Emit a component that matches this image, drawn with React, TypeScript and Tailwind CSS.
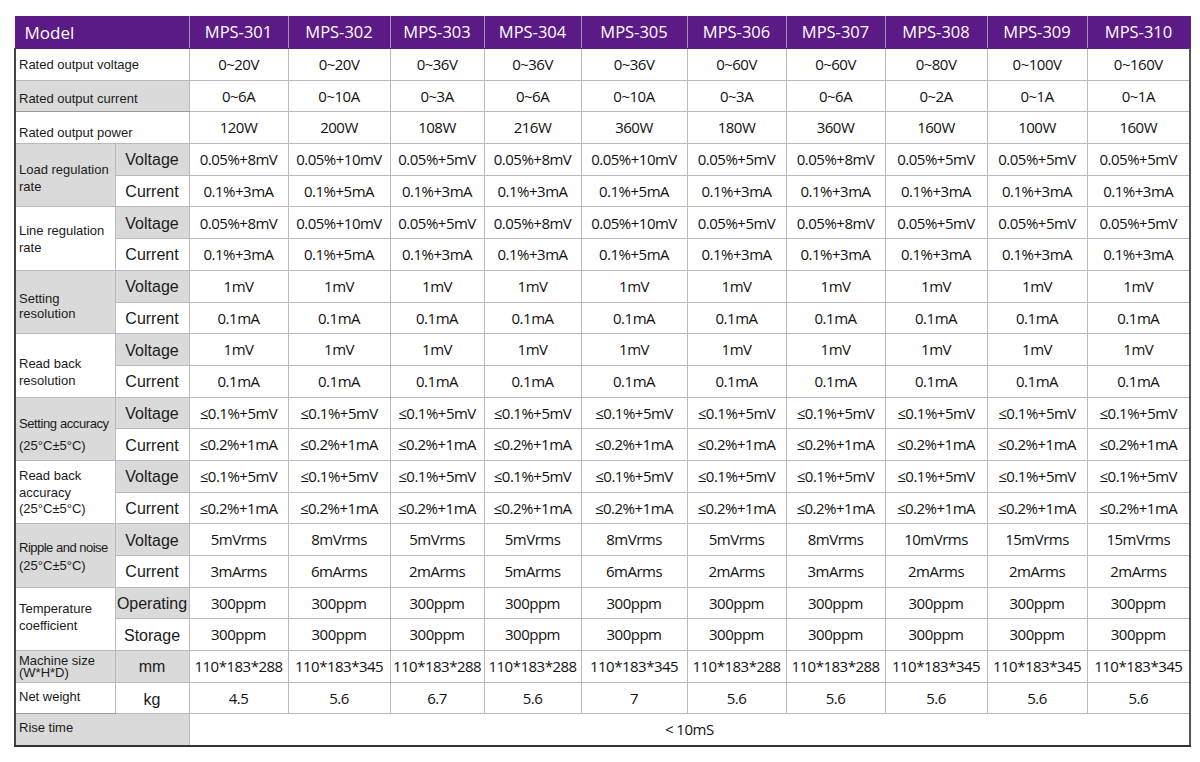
import type { ReactNode } from "react";

const MODELS = [
  "MPS-301",
  "MPS-302",
  "MPS-303",
  "MPS-304",
  "MPS-305",
  "MPS-306",
  "MPS-307",
  "MPS-308",
  "MPS-309",
  "MPS-310",
];

const COL_WIDTHS = [100, 74, 99, 102, 94, 97, 106, 99, 99, 102, 100, 103];

const same = (v: string) => MODELS.map(() => v);

const LOAD_V = ["0.05%+8mV", "0.05%+10mV", "0.05%+5mV", "0.05%+8mV", "0.05%+10mV", "0.05%+5mV", "0.05%+8mV", "0.05%+5mV", "0.05%+5mV", "0.05%+5mV"];
const LOAD_I = ["0.1%+3mA", "0.1%+5mA", "0.1%+3mA", "0.1%+3mA", "0.1%+5mA", "0.1%+3mA", "0.1%+3mA", "0.1%+3mA", "0.1%+3mA", "0.1%+3mA"];

type Group = {
  label: ReactNode;
  labelGray: boolean;
  labelClass?: string;
  rows: { sub: string; gray: boolean; values: string[] }[];
};

const GROUPS: Group[] = [
  {
    label: (
      <>
        Load regulation
        <br />
        rate
      </>
    ),
    labelGray: true,
    labelClass: "leading-[17px] pt-[6px]",
    rows: [
      { sub: "Voltage", gray: true, values: LOAD_V },
      { sub: "Current", gray: false, values: LOAD_I },
    ],
  },
  {
    label: (
      <>
        Line regulation
        <br />
        rate
      </>
    ),
    labelGray: false,
    labelClass: "leading-[17px]",
    rows: [
      { sub: "Voltage", gray: true, values: LOAD_V },
      { sub: "Current", gray: false, values: LOAD_I },
    ],
  },
  {
    label: (
      <>
        Setting
        <br />
        resolution
      </>
    ),
    labelGray: true,
    labelClass: "leading-[15px] pt-[8px]",
    rows: [
      { sub: "Voltage", gray: true, values: same("1mV") },
      { sub: "Current", gray: false, values: same("0.1mA") },
    ],
  },
  {
    label: (
      <>
        Read back
        <br />
        resolution
      </>
    ),
    labelGray: false,
    labelClass: "leading-[17px] pt-[14px]",
    rows: [
      { sub: "Voltage", gray: true, values: same("1mV") },
      { sub: "Current", gray: false, values: same("0.1mA") },
    ],
  },
  {
    label: (
      <>
        <span className="tracking-[-0.4px]">Setting accuracy</span>
        <br />
        (25°C±5°C)
      </>
    ),
    labelGray: true,
    labelClass: "leading-[22px] pt-[12px]",
    rows: [
      { sub: "Voltage", gray: true, values: same("≤0.1%+5mV") },
      { sub: "Current", gray: false, values: same("≤0.2%+1mA") },
    ],
  },
  {
    label: (
      <>
        Read back
        <br />
        accuracy
        <br />
        (25°C±5°C)
      </>
    ),
    labelGray: false,
    labelClass: "leading-[16.5px] pt-[2px]",
    rows: [
      { sub: "Voltage", gray: true, values: same("≤0.1%+5mV") },
      { sub: "Current", gray: false, values: same("≤0.2%+1mA") },
    ],
  },
  {
    label: (
      <>
        <span className="tracking-[-0.5px]">Ripple and noise</span>
        <br />
        (25°C±5°C)
      </>
    ),
    labelGray: true,
    labelClass: "leading-[18px] pt-[3px]",
    rows: [
      {
        sub: "Voltage",
        gray: true,
        values: ["5mVrms", "8mVrms", "5mVrms", "5mVrms", "8mVrms", "5mVrms", "8mVrms", "10mVrms", "15mVrms", "15mVrms"],
      },
      {
        sub: "Current",
        gray: false,
        values: ["3mArms", "6mArms", "2mArms", "5mArms", "6mArms", "2mArms", "3mArms", "2mArms", "2mArms", "2mArms"],
      },
    ],
  },
  {
    label: (
      <>
        Temperature
        <br />
        coefficient
      </>
    ),
    labelGray: false,
    labelClass: "leading-[17px] pb-[4px]",
    rows: [
      { sub: "Operating", gray: true, values: same("300ppm") },
      { sub: "Storage", gray: false, values: same("300ppm") },
    ],
  },
];

const BORDER = "border border-[#b9b9b9]";
const LABEL_FONT = "font-['Liberation_Sans',Arial,sans-serif] text-[13px] text-[#1a1a1a]";
const SUB_FONT = "font-['Liberation_Sans',Arial,sans-serif] text-[16px] text-[#1a1a1a]";
const VALUE_FONT = "font-['Open_Sans',sans-serif] text-[15px] tracking-[-0.5px] text-[#111]";
const GRAY = "bg-[#dadada]";
const ROW_H = "h-[31.7px]";

function Values({ values }: { values: string[] }) {
  return (
    <>
      {values.map((v, i) => (
        <td
          key={i}
          className={`${BORDER} ${VALUE_FONT} p-0 text-center align-middle whitespace-nowrap ${
            i === values.length - 1 ? "border-r-2 border-r-[#555]" : ""
          }`}
        >
          {v}
        </td>
      ))}
    </>
  );
}

export default function App() {
  return (
    <div className="min-h-[762px] w-[1200px] bg-white pt-[16px] pl-[14px]">
      <table className="table-fixed border-collapse" style={{ width: 1175 }}>
        <colgroup>
          {COL_WIDTHS.map((w, i) => (
            <col key={i} style={{ width: w }} />
          ))}
        </colgroup>
        <thead>
          <tr className="h-[32px] bg-[#5c1a86] text-white">
            <th
              colSpan={2}
              className="border border-[#5c1a86] border-r-[#a58fbd] pl-[9px] text-left align-middle font-['Open_Sans',sans-serif] text-[17px] font-normal"
            >
              Model
            </th>
            {MODELS.map((m, i) => (
              <th
                key={m}
                className={`border border-[#5c1a86] ${
                  i === MODELS.length - 1 ? "border-r-[#5c1a86]" : "border-r-[#a58fbd]"
                } p-0 text-center align-middle font-['Open_Sans',sans-serif] text-[16.5px] font-normal whitespace-nowrap`}
              >
                {m}
              </th>
            ))}
          </tr>
        </thead>
        <tbody>
          <tr className={ROW_H}>
            <td colSpan={2} className={`${BORDER} border-l-2 border-l-[#444] ${LABEL_FONT} pl-[3px] align-middle`}>
              Rated output voltage
            </td>
            <Values
              values={["0~20V", "0~20V", "0~36V", "0~36V", "0~36V", "0~60V", "0~60V", "0~80V", "0~100V", "0~160V"]}
            />
          </tr>
          <tr className={ROW_H}>
            <td
              colSpan={2}
              className={`${BORDER} border-b-[#9a9a9a] border-l-2 border-l-[#444] ${GRAY} ${LABEL_FONT} pl-[3px] pt-[5px] align-middle`}
            >
              Rated output current
            </td>
            <Values values={["0~6A", "0~10A", "0~3A", "0~6A", "0~10A", "0~3A", "0~6A", "0~2A", "0~1A", "0~1A"]} />
          </tr>
          <tr className={ROW_H}>
            <td colSpan={2} className={`${BORDER} border-l-2 border-l-[#444] ${LABEL_FONT} pl-[3px] pt-[10px] align-middle`}>
              Rated output power
            </td>
            <Values values={["120W", "200W", "108W", "216W", "360W", "180W", "360W", "160W", "100W", "160W"]} />
          </tr>

          {GROUPS.map((g, gi) =>
            g.rows.map((r, ri) => (
              <tr key={`${gi}-${ri}`} className={ROW_H}>
                {ri === 0 && (
                  <td
                    rowSpan={2}
                    className={`${BORDER} border-l-2 border-l-[#444] ${g.labelGray ? GRAY : ""} ${LABEL_FONT} ${
                      g.labelClass ?? ""
                    } pl-[3px] align-middle whitespace-nowrap`}
                  >
                    {g.label}
                  </td>
                )}
                <td className={`${BORDER} ${r.gray ? GRAY : ""} ${SUB_FONT} p-0 pt-[2px] text-center align-middle`}>
                  {r.sub}
                </td>
                <Values values={r.values} />
              </tr>
            ))
          )}

          <tr className={ROW_H}>
            <td className={`${BORDER} border-l-2 border-l-[#444] ${GRAY} ${LABEL_FONT} pl-[3px] align-middle`}>
              <div className="pt-[1px] leading-[12px]">
                Machine size
                <br />
                (W*H*D)
              </div>
            </td>
            <td className={`${BORDER} ${GRAY} ${SUB_FONT} p-0 pt-[2px] text-center align-middle`}>mm</td>
            <Values
              values={[
                "110*183*288",
                "110*183*345",
                "110*183*288",
                "110*183*288",
                "110*183*345",
                "110*183*288",
                "110*183*288",
                "110*183*345",
                "110*183*345",
                "110*183*345",
              ]}
            />
          </tr>
          <tr className={ROW_H}>
            <td className={`${BORDER} border-b-[#9a9a9a] border-l-2 border-l-[#444] ${LABEL_FONT} pl-[3px] pb-[2px] align-middle`}>
              Net weight
            </td>
            <td className={`${BORDER} ${SUB_FONT} p-0 pt-[4px] text-center align-middle`}>kg</td>
            <Values values={["4.5", "5.6", "6.7", "5.6", "7", "5.6", "5.6", "5.6", "5.6", "5.6"]} />
          </tr>
          <tr className={ROW_H}>
            <td
              colSpan={2}
              className={`${BORDER} border-l-2 border-l-[#444] border-b-2 border-b-[#333] ${GRAY} ${LABEL_FONT} pl-[3px] pb-[4px] align-middle`}
            >
              Rise time
            </td>
            <td
              colSpan={10}
              className={`${BORDER} border-r-2 border-r-[#555] border-b-2 border-b-[#333] ${VALUE_FONT} text-center align-middle`}
            >
              &lt; 10mS
            </td>
          </tr>
        </tbody>
      </table>
    </div>
  );
}
